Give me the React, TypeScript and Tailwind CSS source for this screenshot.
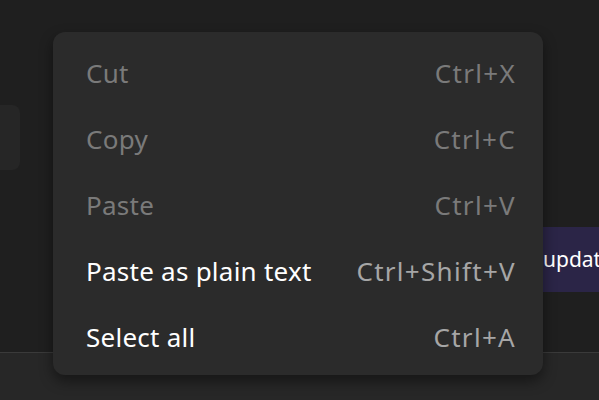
const items = [
  { label: "Cut", shortcut: "Ctrl+X", disabled: true },
  { label: "Copy", shortcut: "Ctrl+C", disabled: true },
  { label: "Paste", shortcut: "Ctrl+V", disabled: true },
  { label: "Paste as plain text", shortcut: "Ctrl+Shift+V", disabled: false },
  { label: "Select all", shortcut: "Ctrl+A", disabled: false },
];

function ContextMenu() {
  return (
    <div className="absolute left-[53px] top-[32px] w-[490px] rounded-[12px] bg-[#2b2b2b] pt-[8px] pb-[5px] shadow-[0_6px_14px_rgba(0,0,0,0.45)]">
      {items.map((item) => (
        <div
          key={item.label}
          className="flex h-[66px] items-center justify-between pl-[33px] pr-[27px] text-[26px]"
        >
          <span
            className={`tracking-[0.25px] ${item.disabled ? "text-[#7a7a7a]" : "text-white"}`}
          >
            {item.label}
          </span>
          <span
            className={`tracking-[1.3px] ${item.disabled ? "text-[#7a7a7a]" : "text-[#a6a6a6]"}`}
          >
            {item.shortcut}
          </span>
        </div>
      ))}
    </div>
  );
}

export default function App() {
  return (
    <div className="relative flex h-[400px] w-[599px] flex-col overflow-hidden bg-[#1f1f1f] font-['Noto_Sans',sans-serif]">
      <div className="flex flex-1 flex-col">
        <div className="mt-[105px] h-[65px] w-[20px] rounded-r-[8px] bg-[#262626]" />
        <div className="mt-[57px] flex justify-end">
          <div className="flex h-[65px] w-[56px] items-center overflow-hidden bg-[#2b2547]">
            <span className="whitespace-nowrap text-[21px] text-white">updates</span>
          </div>
        </div>
      </div>
      <div className="h-[48px] border-t border-[#3a3a3a] bg-[#272727]" />
      <ContextMenu />
    </div>
  );
}
